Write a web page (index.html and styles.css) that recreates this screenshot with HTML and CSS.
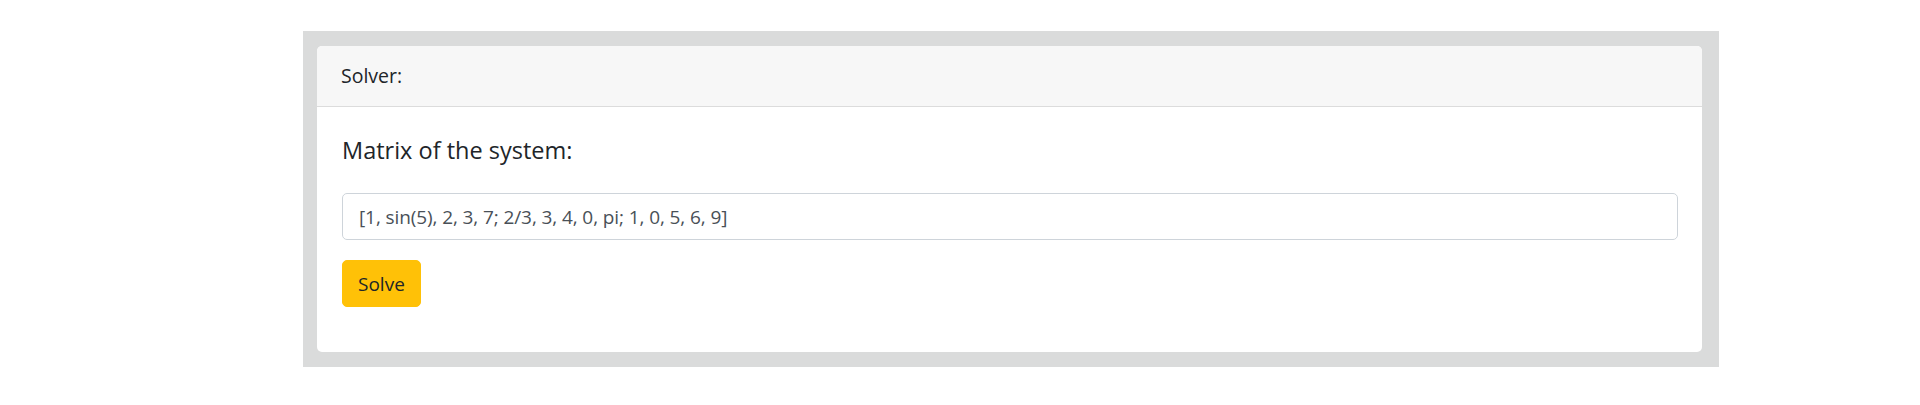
FILE: index.html
```html
<!DOCTYPE html>
<html lang="en">
<head>
<meta charset="utf-8">
<title>Solver</title>
<link rel="stylesheet" href="styles.css">
</head>
<body>
<div class="page">
  <div class="frame">
    <div class="card">
      <div class="card-header">Solver:</div>
      <div class="card-body">
        <h4 class="title">Matrix of the system:</h4>
        <input class="matrix-input" type="text" value="[1, sin(5), 2, 3, 7; 2/3, 3, 4, 0, pi; 1, 0, 5, 6, 9]">
        <div class="actions">
          <button class="btn-solve" type="button">Solve</button>
        </div>
      </div>
    </div>
  </div>
</div>
</body>
</html>
```
FILE: styles.css
```css
* { box-sizing: border-box; }
html, body { margin: 0; padding: 0; background: #fff; }
body {
  font-family: "Open Sans", "Noto Sans", sans-serif;
  color: #212529;
}
.page {
  padding: 31px 201px 38px 303px;
}
.frame {
  background: #dadbdb;
  padding: 15px 17px 15px 14px;
  width: 1416px;
}
.card {
  background: #fff;
  border-radius: 5px;
  overflow: hidden;
  display: flex;
  flex-direction: column;
}
.card-header {
  background: #f7f7f7;
  border-bottom: 1px solid #dcdcdc;
  height: 61px;
  padding: 15px 24px;
  font-size: 19.5px;
  line-height: 30px;
}
.card-body {
  padding: 24px 24px 24px 25px;
  display: flex;
  flex-direction: column;
}
.title {
  margin: 5px 0 28px;
  font-size: 23.5px;
  font-weight: 400;
  line-height: 29px;
}
.matrix-input {
  display: block;
  width: 100%;
  height: 47px;
  padding: 0 16px;
  border: 1px solid #ced4da;
  border-radius: 5px;
  font-family: "Open Sans", "Noto Sans", sans-serif;
  font-size: 19px;
  letter-spacing: -0.1px;
  color: #495057;
  background: #fff;
}
.actions {
  margin: 20px 0 21px;
  display: flex;
}
.btn-solve {
  height: 47px;
  padding: 0 15px;
  background: #ffc107;
  border: 1px solid #ffc107;
  border-radius: 5px;
  font-family: "Open Sans", "Noto Sans", sans-serif;
  font-size: 19px;
  color: #212529;
  cursor: pointer;
}
```
